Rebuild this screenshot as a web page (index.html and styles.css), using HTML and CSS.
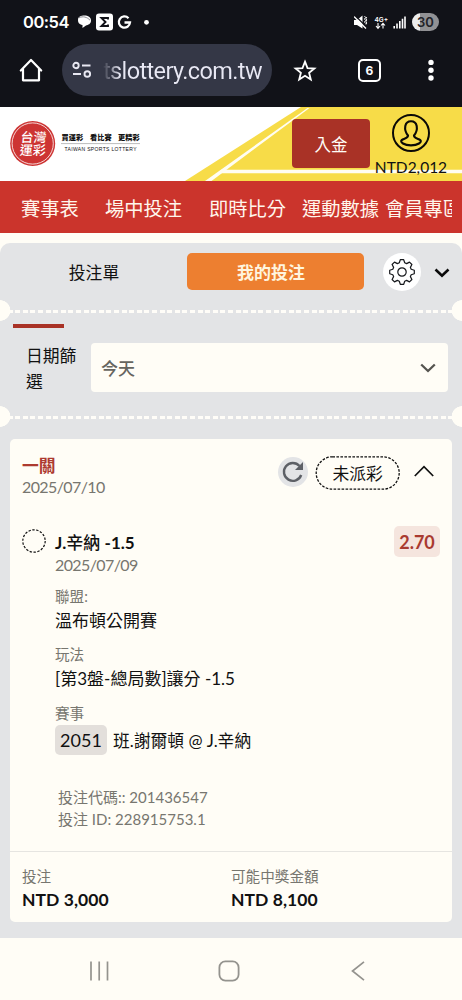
FILE: index.html
```html
<!DOCTYPE html>
<html lang="zh-Hant">
<head>
<meta charset="utf-8">
<title>台灣運彩</title>
<link rel="stylesheet" href="styles.css">
</head>
<body>
<div class="browser">
  <div class="status">
    <span class="clock">00:54</span>
    <svg class="notif" width="76" height="20" viewBox="0 0 76 20">
      <path d="M1 7C1 3.500 4 2.500 7.500 2.500S14 4 14 7.500 11 12 9 12.500L5.500 15V12C2 11.500 1 9.500 1 7Z" fill="#fff"/>
      <path d="M2 4.800C6 2.800 10 4 13 7.200" fill="none" stroke="#8b8b91" stroke-width="1"/>
      <rect x="19" y="0.500" width="17" height="17" rx="3" fill="#fff"/>
      <path d="M31 6.500V5H24.500L28.500 9 24.500 13H31V11.500" fill="none" stroke="#111218" stroke-width="1.900"/>
      <path d="M51.500 5.200A5.600 5.600 0 1 0 53 9.500H47.500" fill="none" stroke="#fff" stroke-width="2.300"/>
      <circle cx="69.500" cy="9.300" r="2.400" fill="#fff"/>
    </svg>
    <div class="status-right">
      <svg width="52" height="18" viewBox="0 0 52 18">
        <path d="M0 6H3L8.500 1.500V14.500L3 11H0Z" fill="#fff"/>
        <path d="M1.500 2L12.500 13" stroke="#111218" stroke-width="1.200"/>
        <path d="M0 2.500L12 14.500" stroke="#fff" stroke-width="1.300"/>
        <path d="M10.500 2l1 1.500-1 1.500 1 1.500-1 1.500 1 1.500M12.800 3l-.8 1.500.8 1.500-.8 1.500.8 1.500-.8 1.500" stroke="#fff" fill="none" stroke-width=".9"/>
        <text class="net" x="20.500" y="7.700">4G+</text>
        <path d="M24 9V14M22 12L24 14.300 26 12M29 14.500V9.500M27 11.500L29 9.300 31 11.500" fill="none" stroke="#fff" stroke-width="1.100"/>
        <path d="M40.200 14.500V12M43 14.500V9.500M45.800 14.500V7M48.500 14.500V4.800M51 14.500V2.500" stroke="#fff" stroke-width="1.600"/>
      </svg>
      <span class="battery">30</span>
    </div>
  </div>
  <div class="bar">
    <svg class="home" width="24" height="26" viewBox="0 0 24 26"><path d="M1.800 13.500L12 3 22.200 13.500M4 11.500V23.300H20V11.500" fill="none" stroke="#fff" stroke-width="2.200" stroke-linejoin="round" stroke-linecap="round"/></svg>
    <div class="url">
      <svg width="20" height="18" viewBox="0 0 20 18"><g fill="none" stroke="#e8e8f2" stroke-width="1.900"><circle cx="4" cy="4.500" r="2.700"/><path d="M10 4.500H18.500M1 13H9"/><circle cx="15.300" cy="13" r="2.800"/></g></svg>
      <span class="url-text">tslottery.com.tw</span>
    </div>
    <svg class="star" width="24" height="24" viewBox="0 0 24 24"><path d="M12 3.700L14.500 10.100 21.400 10.500 16.100 14.800 17.800 21.500 12 17.800 6.200 21.500 7.900 14.800 2.600 10.500 9.500 10.100Z" fill="none" stroke="#fff" stroke-width="1.800"/></svg>
    <span class="tabs">6</span>
    <svg class="more" width="6" height="22" viewBox="0 0 6 22"><g fill="#fff"><circle cx="3" cy="3.400" r="2.700"/><circle cx="3" cy="11.200" r="2.700"/><circle cx="3" cy="19" r="2.700"/></g></svg>
  </div>
</div>

<header class="site">
  <svg class="site-art" width="462" height="74" viewBox="0 0 462 74">
    <path d="M301 0H462V74H185Z" fill="#f7dc48"/>
    <path d="M307.500 1H309.500L211.500 74H205Z" fill="#fffdf2"/>
    <path d="M221 62.800H462V66.200H218Z" fill="#fffdf2"/>
  </svg>
  <svg class="logo" width="132" height="48" viewBox="0 0 132 48">
    <circle cx="22.700" cy="23.500" r="22.500" fill="#cd3433"/>
    <circle cx="22.700" cy="23.500" r="20.600" fill="none" stroke="#fff" stroke-width=".8"/>
    <g class="seal" transform="translate(22.700 23.500) skewX(-4)"><text x="-12.500" y="-1.500">台灣</text><text x="-12.500" y="11.500">運彩</text></g>
    <g class="slogan"><text x="51.500" y="20">買運彩</text><text x="80" y="20">看比賽</text><text x="108" y="20">更精彩</text></g>
    <path d="M51 23.600H130" stroke="#aaa" stroke-width=".8"/>
    <text class="latin" x="54.500" y="30.800" textLength="72">TAIWAN SPORTS LOTTERY</text>
  </svg>
  <button class="deposit">入金</button>
  <div class="account">
    <svg width="40" height="40" viewBox="0 0 40 40"><g fill="none" stroke="#0b0a06"><circle cx="20" cy="20" r="18" stroke-width="2"/><path d="M17 22.500C14.500 19.500 13.800 16 14.300 13 15 9.500 17 8.300 20 8.300S25 9.500 25.700 13C26.200 16 25.500 19.500 23 22.500 23 24.500 24 25 27 26 31 27.300 30.300 29 28 30.500 24 33 16 33 12 30.500 9.700 29 9 27.300 13 26 16 25 17 24.500 17 22.500Z" stroke-width="2.100"/></g></svg>
    <span class="balance">NTD2,012</span>
  </div>
</header>

<nav class="menu"><span>賽事表</span><span>場中投注</span><span>即時比分</span><span>運動數據</span><span>會員專區</span></nav>

<main class="panel">
  <div class="switch">
    <span class="slip">投注單</span>
    <span class="mine">我的投注</span>
    <span class="gear"><svg width="28" height="28" viewBox="-14 -14 28 28"><g fill="none" stroke="#16181c" stroke-width="1.200" stroke-linejoin="round"><circle r="4.200"/><path d="M-2.700-9.200L-1.700-12.300H1.700L2.700-9.200 4.600-8.400 7.500-9.900 9.900-7.500 8.400-4.600 9.200-2.700 12.300-1.700V1.700L9.200 2.700 8.400 4.600 9.900 7.500 7.500 9.900 4.600 8.400 2.700 9.200 1.700 12.300H-1.700L-2.700 9.200-4.600 8.400-7.500 9.900-9.900 7.500-8.400 4.600-9.200 2.700-12.300 1.700V-1.700L-9.200-2.700-8.400-4.600-9.900-7.500-7.500-9.900-4.600-8.400Z"/></g></svg></span>
    <svg class="fold" width="16" height="10" viewBox="0 0 16 10"><path d="M1.500 1.500L8 7.700 14.500 1.500" fill="none" stroke="#0a0a0a" stroke-width="2.600"/></svg>
  </div>
  <div class="perforation"></div>
  <div class="marker"></div>
  <div class="filter">
    <span class="filter-label">日期篩選</span>
    <div class="select"><span>今天</span><svg width="16" height="10" viewBox="0 0 16 10"><path d="M1.200 1.500L8 8 14.800 1.500" fill="none" stroke="#55544f" stroke-width="2.300"/></svg></div>
  </div>
  <div class="perforation"></div>

  <section class="card">
    <div class="card-head">
      <div class="title"><div class="kind">一關</div><div class="date">2025/07/10</div></div>
      <span class="refresh"><svg width="24" height="24" viewBox="0 0 24 24"><path d="M20.200 15A8.900 8.900 0 1 1 18.500 6" fill="none" stroke="#5d6066" stroke-width="2.400"/><path d="M22 2V10H14Z" fill="#5d6066"/></svg></span>
      <span class="state"><svg class="outline" width="85" height="34" viewBox="0 0 85 34"><rect x="1.200" y=".8" width="83" height="32.400" rx="16.200" fill="none" stroke="#111" stroke-width="1.300" stroke-dasharray="2.600 1.400"/></svg>未派彩</span>
      <svg class="collapse" width="20" height="12" viewBox="0 0 20 12"><path d="M.8 11L10 1.600 19.200 11" fill="none" stroke="#111" stroke-width="1.700"/></svg>
    </div>
    <div class="bet">
      <svg class="ring" width="24" height="24" viewBox="0 0 24 24"><circle cx="12" cy="12" r="11.200" fill="none" stroke="#111" stroke-width="1.200" stroke-dasharray="2.400 1.500"/></svg>
      <div class="details">
        <div class="pick-row"><span class="pick"><b>J.</b>辛納 <b>-1.5</b></span><span class="odds">2.70</span></div>
        <div class="date">2025/07/09</div>
        <div class="label">聯盟:</div>
        <div class="value">溫布頓公開賽</div>
        <div class="label">玩法</div>
        <div class="value">[第3盤-總局數]讓分 -1.5</div>
        <div class="label">賽事</div>
        <div class="match"><span class="code">2051</span><span>班.謝爾頓 @ J.辛納</span></div>
        <div class="ids"><div>投注代碼:: 201436547</div><div>投注 ID: 228915753.1</div></div>
      </div>
    </div>
    <div class="totals">
      <div><div class="label">投注</div><div class="money">NTD 3,000</div></div>
      <div><div class="label">可能中獎金額</div><div class="money">NTD 8,100</div></div>
    </div>
  </section>
</main>

<footer class="system">
  <svg width="20" height="20" viewBox="0 0 20 20"><path d="M2 .5V19.500M10.200 .5V19.500M18.500 .5V19.500" stroke="#94938e" stroke-width="1.700"/></svg>
  <svg width="22" height="22" viewBox="0 0 22 22"><rect x="1.400" y="1.400" width="19.200" height="19.200" rx="6" fill="none" stroke="#94938e" stroke-width="1.800"/></svg>
  <svg width="14" height="20" viewBox="0 0 14 20"><path d="M13 .8L1.500 10 13 19.200" fill="none" stroke="#94938e" stroke-width="1.700"/></svg>
</footer>
</body>
</html>
```
FILE: styles.css
```css
* { box-sizing: border-box; }
body {
  margin: 0;
  width: 462px;
  height: 1000px;
  overflow: hidden;
  background: #fffdf6;
  color: #111;
  font-family: Lato, "Noto Sans CJK TC", sans-serif;
}
svg { display: block; flex: none; }

.browser { height: 107px; background: #111218; color: #fff; }
.status { height: 44px; display: flex; padding: 13px 23px 0; }
.clock { width: 47px; font: 600 16.500px/19px Inter, sans-serif; letter-spacing: -0.5px; white-space: nowrap; }
.notif { margin-left: 7px; }
.status-right { margin-left: auto; display: flex; gap: 6px; }
.status-right svg { margin-top: 1px; }
.net { font: 600 6.500px Inter, sans-serif; fill: #fff; }
.battery {
  width: 27px; height: 18px; border-radius: 9px;
  background: linear-gradient(90deg, #eee 30%, #919194 30%);
  color: #222328; text-align: center; font: 600 13px/18px Inter, sans-serif;
}
.bar { height: 52px; display: flex; align-items: center; padding-left: 19px; }
.url { width: 210px; height: 52px; margin-left: 19px; border-radius: 26px; background: #343746; display: flex; align-items: center; padding-left: 10px; }
.url-text {
  margin-left: 11px; padding-top: 2px; font: 400 23.500px/30px Roboto, sans-serif; letter-spacing: -0.62px; white-space: nowrap;
  background: linear-gradient(90deg, #343746 0, #e8e8f4 17px); background-clip: text; -webkit-background-clip: text; color: transparent;
}
.star { margin-left: 21px; }
.tabs { width: 23px; height: 23px; margin-left: 41px; border: 2px solid #fff; border-radius: 5px; text-align: center; font: 700 12px/19px Inter, sans-serif; }
.more { margin-left: 47px; }

.site { height: 74px; position: relative; display: flex; background: #fff; }
.site-art { position: absolute; inset: 0; }
.logo { position: relative; margin: 13px 0 0 10px; overflow: visible; }
.logo text { font-family: "Noto Sans CJK TC", sans-serif; }
.seal text { font-size: 13px; font-weight: 500; fill: #fff; }
.slogan text { font-size: 7.200px; font-weight: 900; fill: #111; }
.logo .latin { font: 400 5px "Liberation Sans", sans-serif; fill: #111; }
.deposit {
  position: relative; width: 78px; height: 49px; margin: 12px 0 0 150px; padding: 3px 0 0; border: 0; border-radius: 4px;
  background: #a93226; color: #fffdf6; font: 400 16.500px/46px Lato, "Noto Sans CJK TC", sans-serif;
}
.account { position: relative; width: 80px; margin: 6px 0 0 1px; display: flex; flex-direction: column; align-items: center; }
.balance { font-size: 15.500px; line-height: 20px; margin-top: 4px; }

.menu { height: 52px; width: 462px; padding: 0 10px 0 21px; background: #cb342c; color: #fff6ec; display: flex; font-size: 19.300px; line-height: 56px; white-space: nowrap; overflow: hidden; }
.menu span:nth-child(1) { flex: 0 0 84px; }
.menu span:nth-child(2) { flex: 0 0 104px; }
.menu span:nth-child(3) { flex: 0 0 93px; }
.menu span:nth-child(4) { flex: 0 0 83px; }
.menu span:nth-child(5) { flex: 1; min-width: 0; overflow: hidden; }

.panel { margin-top: 10px; height: 695px; border-radius: 10px 10px 0 0; background: #e3e4e6; overflow: hidden; }
.switch { height: 57px; display: flex; align-items: center; }
.slip { width: 188px; text-align: center; font-size: 16.800px; line-height: 24px; padding-top: 2px; }
.mine { width: 177px; height: 37px; margin-left: -1px; border-radius: 5px; background: #ed7f30; color: #fff5df; text-align: center; font-size: 17px; font-weight: 700; line-height: 39px; padding-right: 9px; }
.gear { width: 38px; height: 38px; border-radius: 50%; margin-left: 19px; background: #fff; display: flex; align-items: center; justify-content: center; }
.fold { margin-left: 13px; margin-top: 3px; }

.perforation {
  height: 21px;
  background:
    radial-gradient(circle at 0 50%, #fffdf6 10px, transparent 10.600px),
    radial-gradient(circle at 100% 50%, #fffdf6 10px, transparent 10.600px),
    repeating-linear-gradient(90deg, #fffdf8 0 5px, transparent 5px 7.600px) 0 10px / 100% 3px no-repeat;
}
.marker { width: 51px; height: 4px; margin: 3px 0 0 13px; background: #a93226; }
.filter { display: flex; padding: 15px 14px 0 26px; height: 78px; }
.filter-label { width: 65px; padding-right: 12px; font-size: 16.800px; line-height: 26px; }
.select { flex: 1; height: 49px; border-radius: 4px; background: #fffdf6; display: flex; align-items: center; justify-content: space-between; padding: 0 12px 0 10px; font-size: 17px; font-weight: 500; color: #66655f; }

.card { margin: 12px 10px 0; height: 483px; border-radius: 5px; background: #fffdf6; }
.card-head { height: 84px; padding: 16px 18px 0 12px; display: flex; }
.title { width: 257px; }
.kind { color: #ad3a30; font-size: 16.800px; font-weight: 700; line-height: 21px; }
.date { color: #77766f; font-size: 16px; letter-spacing: -0.6px; line-height: 22px; }
.refresh { width: 30px; height: 30px; margin-top: 2px; border-radius: 50%; background: #e3e4e6; display: flex; align-items: center; justify-content: center; }
.state { position: relative; width: 85px; height: 34px; margin: 1px 0 0 7px; text-align: center; font-size: 16.800px; line-height: 36px; }
.outline { position: absolute; inset: 0; }
.collapse { margin: 10px 0 0 14px; }
.bet { height: 328px; display: flex; padding: 0 12px; }
.ring { margin-top: 6px; }
.details { flex: 1; margin-left: 9px; }
.pick-row { height: 31px; display: flex; justify-content: space-between; align-items: flex-start; padding-top: 3px; }
.pick { font-size: 17px; font-weight: 500; line-height: 34px; }
.pick b { font-weight: 700; }
.odds { width: 46px; height: 31px; border-radius: 5px; background: #f5e5de; color: #a93a30; text-align: center; font-size: 18px; font-weight: 700; line-height: 32px; }
.label { color: #77766f; font-size: 14.600px; line-height: 22px; }
.details .label { margin-top: 9.500px; }
.value { font-size: 17px; line-height: 26px; padding-bottom: 1px; }
.match { display: flex; align-items: flex-start; gap: 6px; height: 32px; font-size: 16.800px; line-height: 30px; }
.match span:last-child { padding-top: 1px; }
.code { width: 52px; height: 30px; border-radius: 5px; background: #e3dfdb; text-align: center; font-size: 18px; }
.ids { margin: 29px 0 0 3px; color: #77766f; font-size: 15px; line-height: 22px; }
.totals { height: 71px; padding: 14px 12px 0; border-top: 1.500px solid #e6e5e1; display: grid; grid-template-columns: 209px 1fr; }
.money { font-size: 17.500px; font-weight: 700; line-height: 24px; letter-spacing: 0.05px; }

.system { height: 62px; padding: 3px 97px 0 89px; display: flex; align-items: center; justify-content: space-between; }
.system svg:nth-child(2) { margin-right: 2px; }
```
